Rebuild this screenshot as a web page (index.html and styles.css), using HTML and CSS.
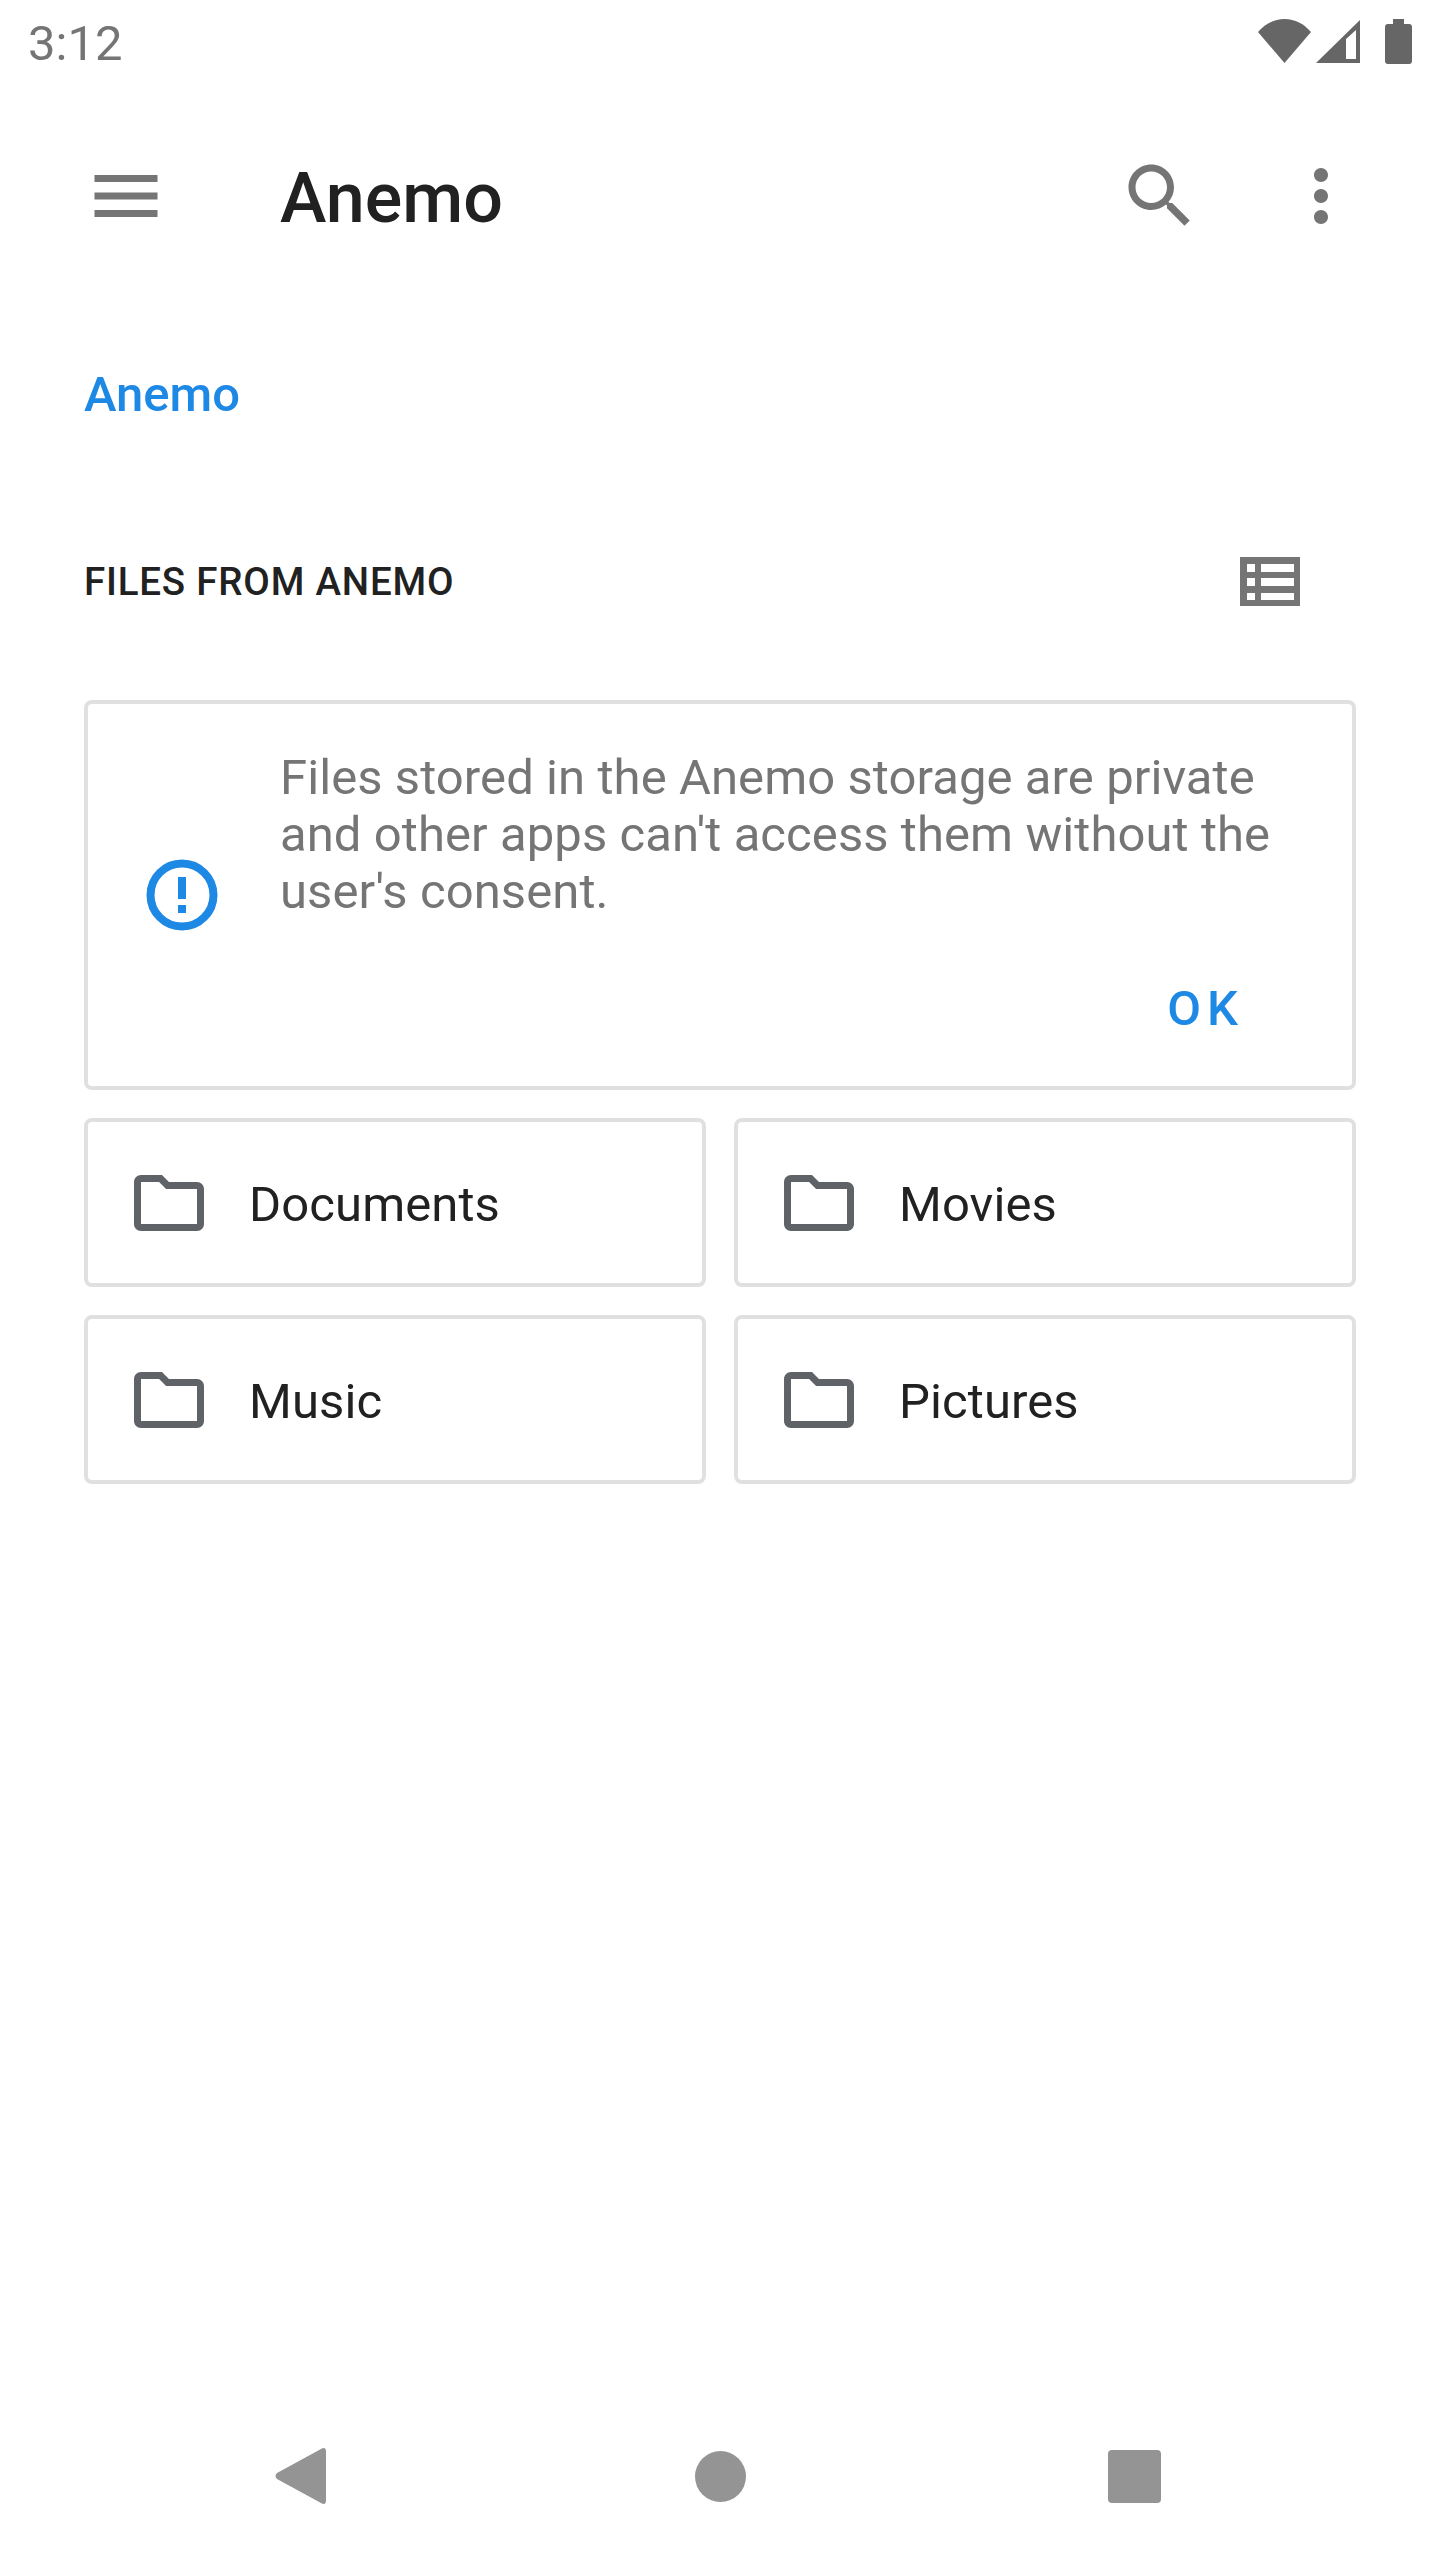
FILE: index.html
```html
<!DOCTYPE html>
<html lang="en">
<head>
    <meta charset="UTF-8">
    <meta name="viewport" content="width=device-width, initial-scale=1.0">
    <title>Anemo</title>
    <link rel="stylesheet" href="styles.css">
</head>
<body>
    <div class="status-bar">
        <span class="status-time">3:12</span>
        <div class="status-icons">
            <svg class="wifi" width="53" height="44" viewBox="0 0 53 44"><path d="M26.5 44L0 13C7 5 16 0 26.5 0S46 5 53 13z"/></svg>
            <svg class="signal" width="44" height="43" viewBox="0 0 44 43"><path fill-rule="evenodd" d="M0 43L44 0V43zM30 39H40V10L30 19z"/></svg>
            <svg class="battery" width="27" height="45" viewBox="0 0 27 45"><path d="M8 0H19V5H24Q27 5 27 8V42Q27 45 24 45H3Q0 45 0 42V8Q0 5 3 5H8z"/></svg>
        </div>
    </div>

    <header class="toolbar">
        <svg class="icon toolbar-menu" viewBox="0 0 24 24"><path d="M3 18h18v-2H3v2zm0-5h18v-2H3v2zm0-7v2h18V6H3z"/></svg>
        <h1 class="toolbar-title">Anemo</h1>
        <svg class="icon" viewBox="0 0 24 24"><path d="M15.5 14h-.79l-.28-.27C15.41 12.59 16 11.11 16 9.5 16 5.91 13.09 3 9.5 3S3 5.91 3 9.5 5.91 16 9.5 16c1.61 0 3.09-.59 4.23-1.57l.27.28v.79l5 4.99L20.49 19l-4.99-5zm-6 0C7.01 14 5 11.99 5 9.5S7.01 5 9.5 5 14 7.01 14 9.5 11.99 14 9.5 14z"/></svg>
        <svg class="icon toolbar-more" viewBox="0 0 24 24"><path d="M12 8c1.1 0 2-.9 2-2s-.9-2-2-2-2 .9-2 2 .9 2 2 2zm0 2c-1.1 0-2 .9-2 2s.9 2 2 2 2-.9 2-2-.9-2-2-2zm0 6c-1.1 0-2 .9-2 2s.9 2 2 2 2-.9 2-2-.9-2-2-2z"/></svg>
    </header>

    <main class="content">
        <div class="breadcrumb">Anemo</div>

        <div class="section-header">
            <h2 class="section-title">FILES FROM ANEMO</h2>
            <svg class="view-toggle" width="60" height="49" viewBox="0 0 60 49"><path fill-rule="evenodd" d="M0 0H60V49H0zM7 7V15H15V7zM21 7V15H54V7zM7 21V29H15V21zM21 21V29H54V21zM7 36V43H15V36zM21 36V43H54V36z"/></svg>
        </div>

        <section class="notice">
            <svg class="icon notice-icon" viewBox="0 0 84 84">
                <circle class="notice-ring" cx="42" cy="42" r="31.5"/>
                <rect x="38" y="24" width="8" height="22"/>
                <rect x="38" y="52" width="8" height="8"/>
            </svg>
            <div class="notice-body">
                <p class="notice-text">Files stored in the Anemo storage are private and other apps can't access them without the user's consent.</p>
                <div class="notice-actions"><span class="notice-ok">OK</span></div>
            </div>
        </section>

        <div class="folder-grid">
            <div class="folder">
                <svg class="icon folder-icon" viewBox="0 0 24 24"><path d="M9.17 6l2 2H20v10H4V6h5.17M10 4H4c-1.1 0-1.99.9-1.99 2L2 18c0 1.1.9 2 2 2h16c1.1 0 2-.9 2-2V8c0-1.1-.9-2-2-2h-8l-2-2z"/></svg>
                <span class="folder-name">Documents</span>
            </div>
            <div class="folder">
                <svg class="icon folder-icon" viewBox="0 0 24 24"><path d="M9.17 6l2 2H20v10H4V6h5.17M10 4H4c-1.1 0-1.99.9-1.99 2L2 18c0 1.1.9 2 2 2h16c1.1 0 2-.9 2-2V8c0-1.1-.9-2-2-2h-8l-2-2z"/></svg>
                <span class="folder-name">Movies</span>
            </div>
            <div class="folder">
                <svg class="icon folder-icon" viewBox="0 0 24 24"><path d="M9.17 6l2 2H20v10H4V6h5.17M10 4H4c-1.1 0-1.99.9-1.99 2L2 18c0 1.1.9 2 2 2h16c1.1 0 2-.9 2-2V8c0-1.1-.9-2-2-2h-8l-2-2z"/></svg>
                <span class="folder-name">Music</span>
            </div>
            <div class="folder">
                <svg class="icon folder-icon" viewBox="0 0 24 24"><path d="M9.17 6l2 2H20v10H4V6h5.17M10 4H4c-1.1 0-1.99.9-1.99 2L2 18c0 1.1.9 2 2 2h16c1.1 0 2-.9 2-2V8c0-1.1-.9-2-2-2h-8l-2-2z"/></svg>
                <span class="folder-name">Pictures</span>
            </div>
        </div>
    </main>

    <nav class="nav-bar">
        <svg class="nav-back" width="51" height="56" viewBox="0 0 51 56"><path d="M46 1Q51 -2 51 4V52Q51 58 46 55L2 31Q-1 28 2 25z"/></svg>
        <div class="nav-home"></div>
        <div class="nav-recent"></div>
    </nav>
</body>
</html>
```

FILE: styles.css
```css
body {
    font-family: Roboto, "Liberation Sans", sans-serif;
    background-color: #fff;
    margin: 0;
    padding: 0;
    width: 1440px;
    height: 2560px;
    display: flex;
    flex-direction: column;
    overflow: hidden;
}

.icon {
    width: 84px;
    height: 84px;
    flex-shrink: 0;
    fill: #757575;
}

/* status bar */
.status-bar {
    height: 84px;
    display: flex;
    align-items: center;
    justify-content: space-between;
    padding: 0 28px 0 28px;
    color: #757575;
}

.status-time {
    margin-top: 4px;
    font-size: 49px;
    line-height: 80px;
}

.status-icons {
    display: flex;
    align-items: flex-start;
    height: 84px;
    padding-top: 19px;
    box-sizing: border-box;
}

.status-icons svg {
    fill: #666;
}

.signal {
    margin: 1px 25px 0 5px;
}

/* toolbar */
.toolbar {
    height: 224px;
    display: flex;
    align-items: center;
    padding-left: 84px;
    padding-right: 77px;
}

.toolbar-title {
    flex: 1;
    margin: 4px 0 0 112px;
    font-size: 70px;
    font-weight: 500;
    color: #212121;
}

.toolbar-more {
    margin-left: 77px;
}

/* content */
.content {
    flex: 1;
    padding: 0 84px;
}

.breadcrumb {
    margin-top: 52px;
    font-size: 49px;
    line-height: 70px;
    font-weight: 500;
    color: #1e88e5;
}

.section-header {
    display: flex;
    align-items: center;
    justify-content: space-between;
    height: 84px;
    margin-top: 109px;
    padding-right: 56px;
}

.section-title {
    margin: 0;
    font-size: 38.5px;
    font-weight: 500;
    letter-spacing: 0.8px;
    color: #212121;
}

.view-toggle {
    fill: #757575;
}

.notice {
    display: flex;
    align-items: center;
    box-sizing: border-box;
    height: 390px;
    margin-top: 77px;
    border: 4px solid #e0e0e0;
    border-radius: 8px;
}

.notice-icon {
    fill: #1e88e5;
    margin-left: 52px;
}

.notice-ring {
    fill: none;
    stroke: #1e88e5;
    stroke-width: 8;
}

.notice-body {
    flex: 1;
    margin-left: 56px;
    margin-right: 40px;
    padding-bottom: 4px;
}

.notice-text {
    margin: 0;
    font-size: 49px;
    line-height: 57px;
    letter-spacing: 0.08px;
    color: #757575;
}

.notice-actions {
    display: flex;
    justify-content: flex-end;
    margin-top: 60px;
    padding-right: 68px;
}

.notice-ok {
    font-size: 49px;
    line-height: 57px;
    font-weight: 500;
    letter-spacing: 6px;
    color: #1e88e5;
}

.folder-grid {
    display: grid;
    grid-template-columns: 1fr 1fr;
    gap: 28px;
    margin-top: 28px;
}

.folder {
    display: flex;
    align-items: center;
    box-sizing: border-box;
    height: 169px;
    padding-left: 39px;
    border: 4px solid #e0e0e0;
    border-radius: 8px;
}

.folder-icon {
    fill: #5f6368;
}

.folder-name {
    margin: 3px 0 0 38px;
    font-size: 49px;
    letter-spacing: 0.1px;
    color: #212121;
}

/* nav bar */
.nav-bar {
    height: 168px;
    display: flex;
    align-items: center;
    padding-left: 275px;
}

.nav-back {
    fill: #949494;
}

.nav-home {
    width: 51px;
    height: 51px;
    margin-left: 369px;
    border-radius: 50%;
    background-color: #949494;
}

.nav-recent {
    width: 53px;
    height: 53px;
    margin-left: 362px;
    border-radius: 4px;
    background-color: #949494;
}
```
